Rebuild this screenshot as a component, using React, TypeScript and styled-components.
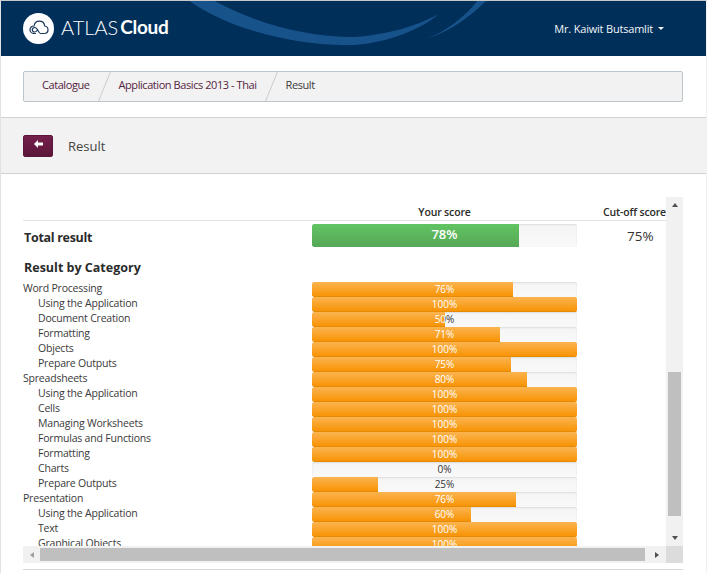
import styled, { createGlobalStyle } from 'styled-components';

const GlobalStyle = createGlobalStyle`
  html, body {
    margin: 0;
    padding: 0;
    background: #fff;
  }
  body {
    font-family: "Open Sans", "Noto Sans", "Liberation Sans", sans-serif;
    color: #333;
  }
`;

const Page = styled.div`
  width: 707px;
  height: 573px;
  box-sizing: border-box;
  overflow: hidden;
  border-top: 1px solid #c8c8c8;
  border-left: 1px solid #e2e2e2;
  border-right: 1px solid #f0f0f0;
`;

const Header = styled.header`
  height: 55px;
  background: #002f5a;
  display: flex;
  align-items: center;
  justify-content: space-between;
  padding: 0 42px 0 22px;
  overflow: hidden;
  position: relative;
`;

const Swoosh = styled.svg`
  position: absolute;
  left: 0;
  top: 0;
`;

const Logo = styled.div`
  display: flex;
  align-items: center;
  gap: 7px;
  position: relative;
  height: 31px;
  margin-top: -1px;
`;

const LogoCircle = styled.div`
  width: 31px;
  height: 31px;
  border-radius: 50%;
  background: #fff;
  display: flex;
  align-items: center;
  justify-content: center;
`;

const LogoText = styled.div`
  font-family: Lato, "Open Sans", sans-serif;
  font-size: 20px;
  font-weight: 300;
  line-height: 24px;
  color: #fff;
  display: flex;
  gap: 2px;
  margin-top: -2px;
`;

const LogoBold = styled.span`
  font-weight: 700;
  font-size: 19px;
  letter-spacing: -0.3px;
`;

const UserMenu = styled.div`
  position: relative;
  display: flex;
  align-items: center;
  gap: 5px;
  font-size: 11px;
  letter-spacing: -0.2px;
  color: #f2f5f8;
`;

const Caret = styled.span`
  width: 0;
  height: 0;
  border-left: 3px solid transparent;
  border-right: 3px solid transparent;
  border-top: 3px solid #f2f5f8;
`;

const BreadcrumbWrap = styled.div`
  padding: 15px 23px 15px 22px;
  border-bottom: 1px solid #cfd2d4;
`;

const Breadcrumb = styled.nav`
  height: 31px;
  box-sizing: border-box;
  background: #f2f2f2;
  border: 1px solid #bcc6cc;
  border-radius: 2px;
  display: flex;
  align-items: center;
  padding-left: 18px;
  font-size: 11px;
  letter-spacing: -0.43px;
`;

const Crumb = styled.span<{ $current?: boolean }>`
  color: ${(p) => (p.$current ? '#3a3a3a' : '#55243f')};
  margin-top: -5px;
`;

const CrumbDivider = styled.span`
  width: 1px;
  height: 29px;
  margin: 0 14px;
  background: #c6ccd1;
  transform: skewX(-22deg);
`;

const TitleBar = styled.div`
  height: 55px;
  background: #f2f2f2;
  border-bottom: 1px solid #d2d2d2;
  display: flex;
  align-items: center;
  gap: 15px;
  padding-left: 22px;
`;

const BackButton = styled.button`
  width: 30px;
  height: 22px;
  padding: 0 0 3px;
  border: 1px solid #5a1538;
  border-radius: 2px;
  background: linear-gradient(#74204b, #5c1639);
  display: flex;
  align-items: center;
  justify-content: center;
`;

const Title = styled.h1`
  margin: 0;
  font-size: 13px;
  font-weight: 400;
  color: #444;
`;

const Panel = styled.section`
  margin: 23px 23px 0 22px;
  height: 366px;
  display: grid;
  grid-template-columns: 1fr 17px;
  grid-template-rows: 1fr 17px;
`;

const Viewport = styled.div`
  overflow: hidden;
`;

const ScoreHeader = styled.div`
  height: 24px;
  box-sizing: border-box;
  display: grid;
  grid-template-columns: 289px 265px 89px;
  align-items: end;
  padding-bottom: 1px;
  border-bottom: 1px solid #e2e2e2;
  font-size: 10.5px;
  font-weight: 600;
  letter-spacing: -0.15px;
  color: #2b2b2b;
  white-space: nowrap;
`;

const HeaderCell = styled.div<{ $align: string }>`
  text-align: ${(p) => p.$align};
`;

const TotalRow = styled.div`
  display: grid;
  grid-template-columns: 289px 265px 89px;
  align-items: center;
  height: 23px;
  margin-top: 3px;
`;

const TotalLabel = styled.div`
  font-size: 12.5px;
  font-weight: 700;
  letter-spacing: -0.3px;
  color: #2b2b2b;
  padding: 3px 0 0 1px;
`;

const CutOff = styled.div`
  font-size: 13.5px;
  color: #333;
  padding: 1px 0 0 50px;
`;

const CategoryTitle = styled.h2`
  margin: 11px 0 4px 1px;
  font-size: 12.5px;
  line-height: 19px;
  font-weight: 700;
  color: #2b2b2b;
`;

const Row = styled.div`
  display: grid;
  grid-template-columns: 289px 265px;
  align-items: center;
  height: 15px;
`;

const RowLabel = styled.div<{ $sub?: boolean }>`
  padding-left: ${(p) => (p.$sub ? '15px' : '0')};
  padding-bottom: 2px;
  font-size: 10.5px;
  letter-spacing: -0.2px;
  color: #3a3a3a;
  white-space: nowrap;
`;

const Track = styled.div<{ $big?: boolean }>`
  display: grid;
  height: ${(p) => (p.$big ? '23px' : '15px')};
  border-radius: 2px;
  overflow: hidden;
  background: linear-gradient(#f5f5f5, #f9f9f9);
  box-shadow: inset 0 1px 2px rgba(0, 0, 0, 0.1);
`;

const TrackLabel = styled.div<{ $big?: boolean }>`
  grid-area: 1 / 1;
  text-align: center;
  font-size: ${(p) => (p.$big ? '13px' : '10px')};
  font-weight: ${(p) => (p.$big ? 600 : 400)};
  line-height: ${(p) => (p.$big ? '21px' : '14px')};
  color: #333;
`;

const Fill = styled.div<{ $big?: boolean }>`
  grid-area: 1 / 1;
  overflow: hidden;
  border-radius: 2px 0 0 2px;
  background: ${(p) =>
    p.$big ? 'linear-gradient(#62c462, #57a957)' : 'linear-gradient(#fbb450, #f89406)'};
  border-bottom: 1px solid ${(p) => (p.$big ? '#57a957' : '#e48a05')};
  box-sizing: border-box;
`;

const FillLabel = styled(TrackLabel)`
  width: 265px;
  color: #fff;
`;

const VTrack = styled.div`
  background: #f1f1f1;
  display: flex;
  flex-direction: column;
  align-items: center;
`;

const VThumb = styled.div`
  width: 13px;
  height: 144px;
  flex: none;
  margin-top: 165px;
  background: #bfbfbf;
`;

const HTrack = styled.div`
  background: #f1f1f1;
  display: flex;
  align-items: center;
`;

const HThumb = styled.div`
  width: 605px;
  height: 13px;
  background: #bfbfbf;
`;

const Arrow = styled.span<{ $dir: 'up' | 'down' | 'left' | 'right'; $spacer?: string }>`
  flex: none;
  width: 0;
  height: 0;
  border: 3.5px solid transparent;
  margin: ${(p) => p.$spacer || '0'};
  ${(p) =>
    p.$dir === 'up'
      ? 'border-bottom: 4px solid #505050; border-top: 0;'
      : p.$dir === 'down'
        ? 'border-top: 4px solid #505050; border-bottom: 0;'
        : p.$dir === 'left'
          ? 'border-right: 4px solid #a0a0a0; border-left: 0;'
          : 'border-left: 4px solid #505050; border-right: 0;'}
`;

const Corner = styled.div`
  background: #dcdcdc;
`;

const BottomRule = styled.div`
  margin: 6px 23px 0 22px;
  border-top: 1px solid #d8d8d8;
`;

type Score = { name: string; value: number; width?: number; sub?: boolean };

const scores: Score[] = [
  { name: 'Word Processing', value: 76 },
  { name: 'Using the Application', value: 100, sub: true },
  { name: 'Document Creation', value: 50, sub: true },
  { name: 'Formatting', value: 71, sub: true },
  { name: 'Objects', value: 100, sub: true },
  { name: 'Prepare Outputs', value: 75, sub: true },
  { name: 'Spreadsheets', value: 80, width: 81 },
  { name: 'Using the Application', value: 100, sub: true },
  { name: 'Cells', value: 100, sub: true },
  { name: 'Managing Worksheets', value: 100, sub: true },
  { name: 'Formulas and Functions', value: 100, sub: true },
  { name: 'Formatting', value: 100, sub: true },
  { name: 'Charts', value: 0, sub: true },
  { name: 'Prepare Outputs', value: 25, sub: true },
  { name: 'Presentation', value: 76, width: 77 },
  { name: 'Using the Application', value: 60, sub: true },
  { name: 'Text', value: 100, sub: true },
  { name: 'Graphical Objects', value: 100, sub: true },
];

function ProgressBar({ value, width, big }: { value: number; width?: number; big?: boolean }) {
  return (
    <Track $big={big}>
      <TrackLabel $big={big}>{value}%</TrackLabel>
      {value > 0 && (
        <Fill $big={big} style={{ width: `${width ?? value}%` }}>
          <FillLabel $big={big}>{value}%</FillLabel>
        </Fill>
      )}
    </Track>
  );
}

export default function App() {
  return (
    <Page>
      <GlobalStyle />
      <Header>
        <Swoosh width="707" height="55" viewBox="0 0 707 55">
          <path
            d="M187 -1 C230 30 300 46 354 44 C390 41 420 28 438 13 C415 25 390 33 354 36 C300 36 250 20 212 -1 Z"
            fill="#17528a"
          />
          <path d="M425 38 C450 30 470 15 486 -1 L477 -1 C465 14 450 28 425 38 Z" fill="#17528a" />
        </Swoosh>
        <Logo>
          <LogoCircle>
            <svg width="20" height="16" viewBox="0 0 20 16" fill="none" stroke="#17365a" strokeWidth="1.2">
              <path d="M7 13.5H5C2.8 13.5 1 11.8 1 9.7S2.8 6 5 6C5.6 3 7.8 1.2 10.4 1.2C13.2 1.2 15.4 3.3 15.7 6C17.6 6.3 19 7.9 19 9.8C19 11.9 17.4 13.5 15.2 13.5" />
              <path d="M15 13.5H11.5C9.5 13.5 8.8 7.5 5.8 7.5C4.3 7.5 3.3 8.6 3.3 9.8C3.3 11 4.3 12 5.6 12C6.8 12 7.6 11.2 8.2 10.2" />
            </svg>
          </LogoCircle>
          <LogoText>
            <span>ATLAS</span>
            <LogoBold>Cloud</LogoBold>
          </LogoText>
        </Logo>
        <UserMenu>
          Mr. Kaiwit Butsamlit
          <Caret />
        </UserMenu>
      </Header>
      <BreadcrumbWrap>
        <Breadcrumb>
          <Crumb>Catalogue</Crumb>
          <CrumbDivider />
          <Crumb>Application Basics 2013 - Thai</Crumb>
          <CrumbDivider />
          <Crumb $current>Result</Crumb>
        </Breadcrumb>
      </BreadcrumbWrap>
      <TitleBar>
        <BackButton aria-label="Back">
          <svg width="9" height="8" viewBox="0 0 9 8" fill="#fff">
            <polygon points="0,4 4,0 4,2.5 9,2.5 9,5.5 4,5.5 4,8" />
          </svg>
        </BackButton>
        <Title>Result</Title>
      </TitleBar>
      <Panel>
        <Viewport>
          <ScoreHeader>
            <span />
            <HeaderCell $align="center">Your score</HeaderCell>
            <HeaderCell $align="right">Cut-off score</HeaderCell>
          </ScoreHeader>
          <TotalRow>
            <TotalLabel>Total result</TotalLabel>
            <ProgressBar value={78} big />
            <CutOff>75%</CutOff>
          </TotalRow>
          <CategoryTitle>Result by Category</CategoryTitle>
          {scores.map((s, i) => (
            <Row key={i}>
              <RowLabel $sub={s.sub}>{s.name}</RowLabel>
              <ProgressBar value={s.value} width={s.width} />
            </Row>
          ))}
        </Viewport>
        <VTrack>
          <Arrow $dir="up" $spacer="6px 0 0" />
          <VThumb />
          <Arrow $dir="down" $spacer="20px 0 0" />
        </VTrack>
        <HTrack>
          <Arrow $dir="left" $spacer="0 6px 0 7px" />
          <HThumb />
          <Arrow $dir="right" $spacer="0 0 0 10px" />
        </HTrack>
        <Corner />
      </Panel>
      <BottomRule />
    </Page>
  );
}
